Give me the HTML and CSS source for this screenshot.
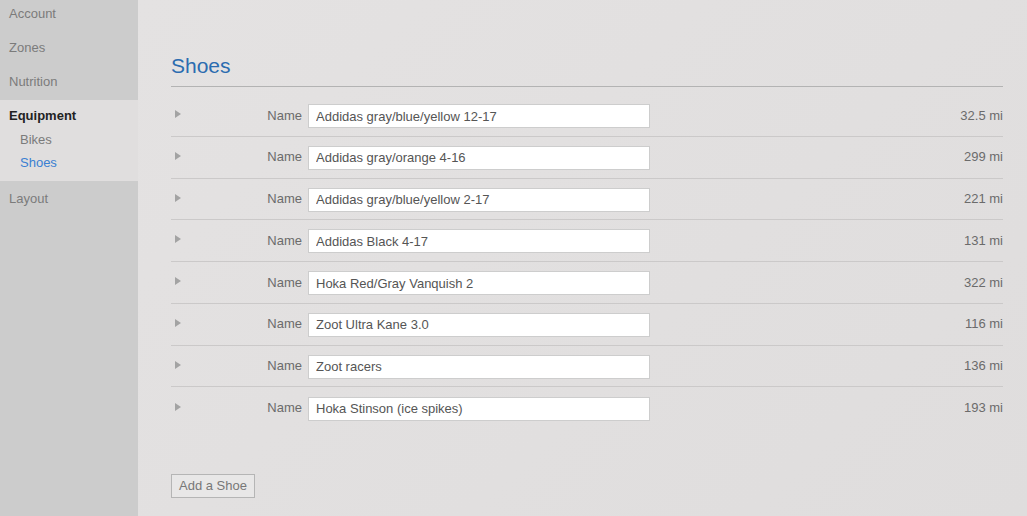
FILE: index.html
```html
<!DOCTYPE html>
<html>
<head>
<meta charset="utf-8">
<link rel="stylesheet" href="styles.css">
</head>
<body>
<div class="app">
  <nav class="sidebar">
    <div class="nav-top">
      <div class="nav-item">Account</div>
      <div class="nav-item">Zones</div>
      <div class="nav-item">Nutrition</div>
    </div>
    <div class="nav-section">
      <div class="nav-head">Equipment</div>
      <div class="nav-sub">Bikes</div>
      <div class="nav-sub nav-sub-active">Shoes</div>
    </div>
    <div class="nav-item nav-layout">Layout</div>
  </nav>
  <main class="main">
    <h1 class="title">Shoes</h1>
    <div class="list">
      <div class="row"><span class="toggle"></span><label class="label">Name</label><input class="field" value="Addidas gray/blue/yellow 12-17"><span class="dist">32.5 mi</span></div>
      <div class="row"><span class="toggle"></span><label class="label">Name</label><input class="field" value="Addidas gray/orange 4-16"><span class="dist">299 mi</span></div>
      <div class="row"><span class="toggle"></span><label class="label">Name</label><input class="field" value="Addidas gray/blue/yellow 2-17"><span class="dist">221 mi</span></div>
      <div class="row"><span class="toggle"></span><label class="label">Name</label><input class="field" value="Addidas Black 4-17"><span class="dist">131 mi</span></div>
      <div class="row"><span class="toggle"></span><label class="label">Name</label><input class="field" value="Hoka Red/Gray Vanquish 2"><span class="dist">322 mi</span></div>
      <div class="row"><span class="toggle"></span><label class="label">Name</label><input class="field" value="Zoot Ultra Kane 3.0"><span class="dist">116 mi</span></div>
      <div class="row"><span class="toggle"></span><label class="label">Name</label><input class="field" value="Zoot racers"><span class="dist">136 mi</span></div>
      <div class="row"><span class="toggle"></span><label class="label">Name</label><input class="field" value="Hoka Stinson (ice spikes)"><span class="dist">193 mi</span></div>
    </div>
    <button class="add-btn">Add a Shoe</button>
  </main>
</div>
</body>
</html>
```
FILE: styles.css
```css
html, body {
  margin: 0;
  padding: 0;
  height: 100%;
}
body {
  font-family: "Liberation Sans", Arial, sans-serif;
  font-size: 13px;
  color: #666;
  background: #e1dfdf;
  overflow: hidden;
}
.app {
  display: flex;
  height: 516px;
}
.sidebar {
  width: 138px;
  flex: none;
  background: #cccccc;
  display: flex;
  flex-direction: column;
}
.nav-top {
  margin-top: -4px;
}
.nav-item {
  height: 34px;
  box-sizing: border-box;
  padding: 10px 0 8px 9px;
  line-height: 16px;
  color: #7b7b7b;
}
.nav-section {
  margin-top: 2px;
  background: #e0dede;
  padding: 8px 0 10px;
}
.nav-head {
  padding-left: 9px;
  line-height: 16px;
  font-weight: bold;
  color: #222;
}
.nav-sub {
  padding-left: 20px;
  line-height: 16px;
  margin-top: 8px;
  color: #7b7b7b;
}
.nav-sub-active {
  margin-top: 7px;
  color: #3a80d2;
}
.nav-layout {
  padding-top: 10px;
}
.main {
  flex: 1;
  padding: 0 24px 0 33px;
  background: linear-gradient(135deg, #e4e2e2 0%, #dfdddd 100%);
}
.title {
  margin: 52px 0 0;
  font-size: 21px;
  font-weight: normal;
  line-height: 28px;
  color: #2b6cb0;
  padding-bottom: 6px;
  border-bottom: 1px solid #b3b3b3;
}
.list {
  margin-top: 8px;
}
.row {
  display: flex;
  align-items: center;
  height: 41.75px;
  box-sizing: border-box;
  padding: 9px 0 7.75px;
  border-bottom: 1px solid #cbc9c9;
}
.row:last-child {
  border-bottom: none;
}
.toggle {
  width: 0;
  height: 0;
  margin-left: 4px;
  margin-top: -4px;
  border-top: 4px solid transparent;
  border-bottom: 4px solid transparent;
  border-left: 6px solid #a3a3a3;
}
.label {
  width: 121px;
  text-align: right;
  margin-right: 6px;
  margin-top: -2px;
  color: #6b6b6b;
}
.field {
  width: 342px;
  height: 24px;
  box-sizing: border-box;
  border: 1px solid #cdcdcd;
  background: #fff;
  padding: 0 7px;
  font-family: "Liberation Sans", Arial, sans-serif;
  font-size: 13px;
  color: #555;
  outline: none;
}
.dist {
  margin-left: auto;
  margin-top: -2px;
  color: #6b6b6b;
}
.add-btn {
  margin-top: 45px;
  width: 84px;
  height: 24px;
  padding: 0 0 1px;
  border: 1px solid #b5b5b5;
  background: #e8e7e7;
  font-family: "Liberation Sans", Arial, sans-serif;
  font-size: 13px;
  color: #777;
}
```
